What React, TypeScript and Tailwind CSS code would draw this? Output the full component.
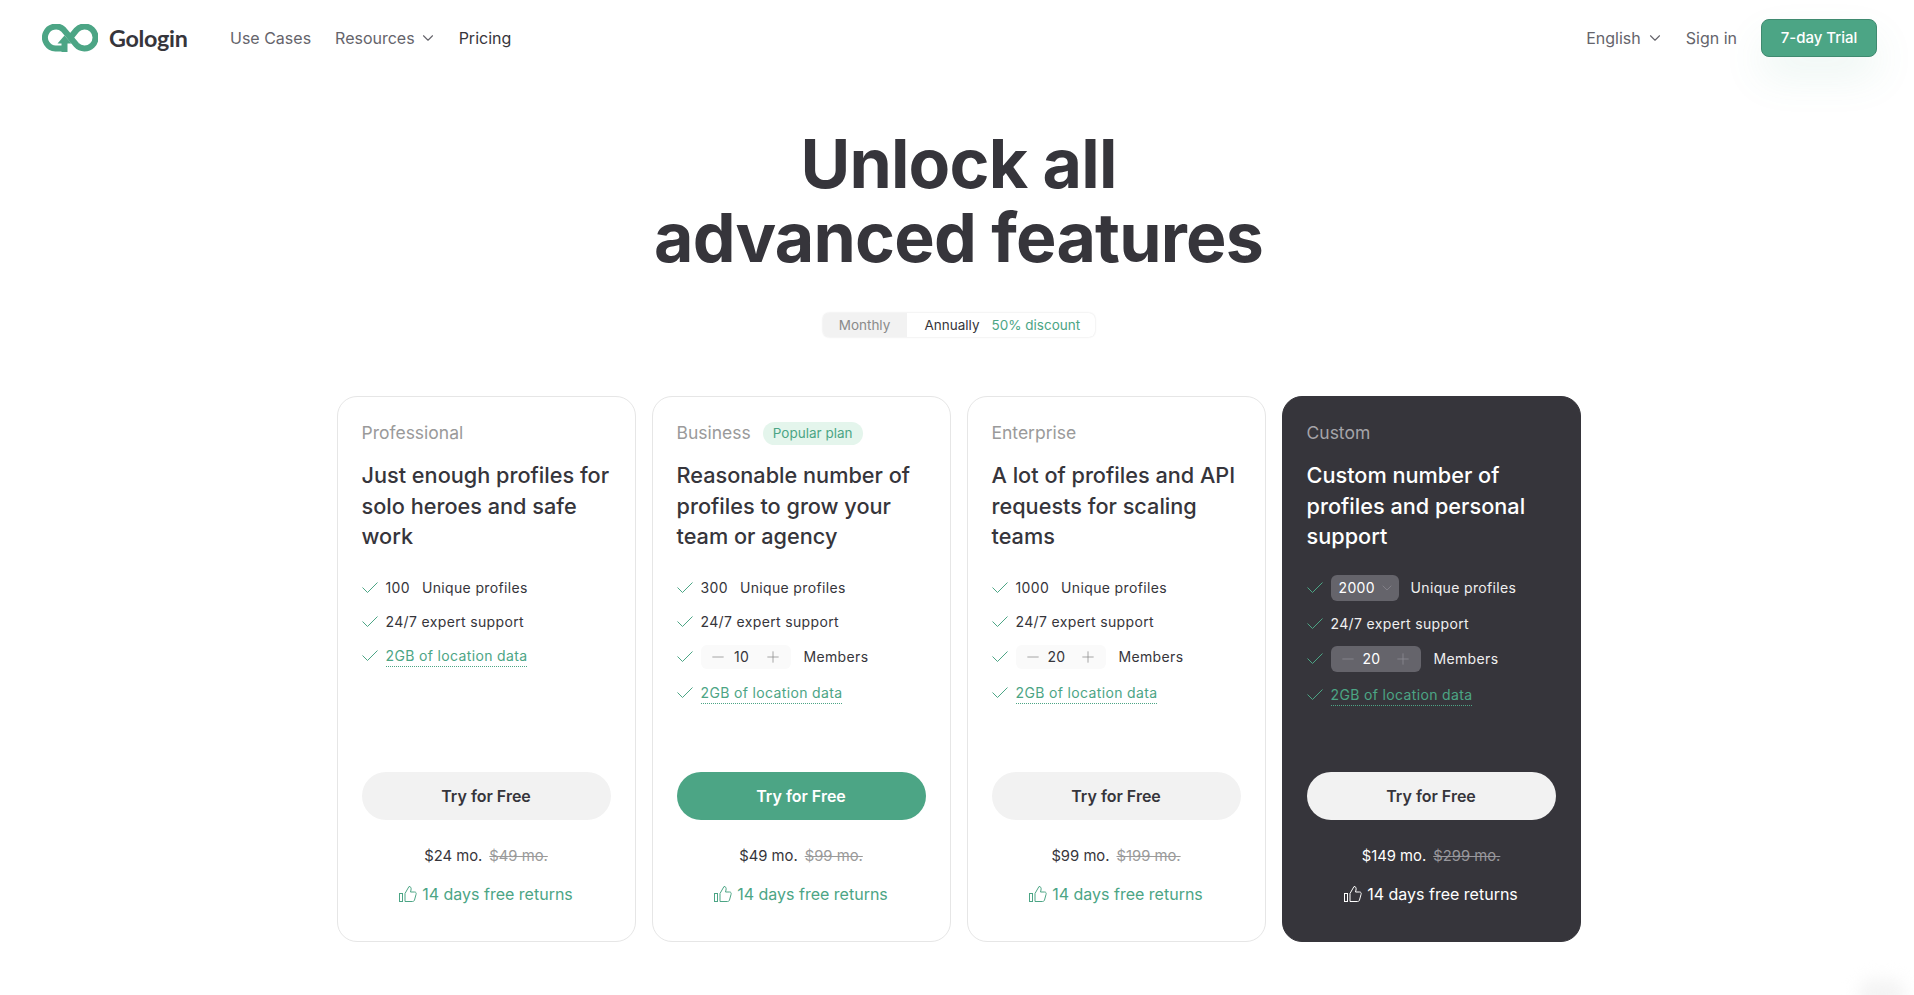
import React from 'react';
import { ChevronDown, Minus, Plus } from 'lucide-react';

type Plan = {
  name: string;
  title: string;
  profiles: string;
  members?: string;
  price: string;
  oldPrice: string;
  popular?: boolean;
  dark?: boolean;
};

const plans: Plan[] = [
  { name: 'Professional', title: 'Just enough profiles for solo heroes and safe work', profiles: '100', price: '$24 mo.', oldPrice: '$49 mo.' },
  { name: 'Business', title: 'Reasonable number of profiles to grow your team or agency', profiles: '300', members: '10', price: '$49 mo.', oldPrice: '$99 mo.', popular: true },
  { name: 'Enterprise', title: 'A lot of profiles and API requests for scaling teams', profiles: '1000', members: '20', price: '$99 mo.', oldPrice: '$199 mo.' },
  { name: 'Custom', title: 'Custom number of profiles and personal support', profiles: '2000', members: '20', price: '$149 mo.', oldPrice: '$299 mo.', dark: true },
];

const Logo = () => (
  <svg width="56" height="28" viewBox="0 0 56 28" fill="none" className="shrink-0">
    <path d="M24 24.500 L13.500 24.500 A11 11 0 1 1 21.500 5.500 L34.500 21 A11 11 0 1 0 34.500 6 L28 14" stroke="#4ca585" strokeWidth="6" />
    <path d="M19.500 28 V19.500 H15.500 L22.500 11.500 L29.500 19.500 H25.500 V28 Z" fill="#4ca585" />
  </svg>
);

const CheckMark = () => (
  <svg width="16" height="11" viewBox="0 0 16 11" fill="none" className="mr-2 shrink-0">
    <path d="M0.500 5.500 L5.500 10.500 L15.500 0.500" stroke="#4ca585" strokeWidth="1" />
  </svg>
);

const ThumbIcon = () => (
  <svg width="18" height="18" viewBox="0 0 18 18" fill="none" stroke="currentColor" strokeWidth="1" className="shrink-0">
    <rect x="0.500" y="8.500" width="3" height="8" />
    <path d="M6 8.500 L10 1.500 C11.500 1.500 12.500 2.500 12 5 L11.500 7 H15.500 C17 7 17.500 8 17 9.500 L15.500 15 C15.200 16 14.500 16.500 13.500 16.500 H6 Z" />
  </svg>
);

const FeatureRow = ({ children }: { children: React.ReactNode }) => (
  <li className="flex items-center">
    <CheckMark />
    {children}
  </li>
);

const Stepper = ({ value, dark }: { value: string; dark?: boolean }) => (
  <span className={`flex w-[90px] items-center justify-between rounded-[6px] px-[8px] ${dark ? 'h-[26px] bg-[#65646b] text-white' : 'h-[24px] bg-[#fafafa] text-[#36353b]'}`}>
    <Minus size={18} strokeWidth={1} className={dark ? 'text-[#8f8e95]' : 'text-[#8a8a8a]'} />
    <span className="mr-[8px]">{value}</span>
    <Plus size={18} strokeWidth={1} className={dark ? 'text-[#8f8e95]' : 'text-[#8a8a8a]'} />
  </span>
);

const PlanCard = ({ plan }: { plan: Plan }) => {
  const { dark } = plan;
  return (
    <div className={`flex h-[546px] w-[299px] flex-col rounded-[20px] border px-6 pt-[24px] ${dark ? 'border-[#36353b] bg-[#36353b]' : 'border-[#e6e6e6] bg-white'}`}>
      <div className="flex h-6 items-center">
        <span className={`text-[17.500px] ${dark ? 'text-[#a5a4a9]' : 'text-[#9a9a9a]'}`}>{plan.name}</span>
        {plan.popular && (
          <span className="ml-3 rounded-full bg-[#e4f5ec] px-[10px] py-[2px] text-[13.500px] leading-[19px] text-[#4ca585]">Popular plan</span>
        )}
      </div>
      <h3 className={`mt-[15px] text-[21.700px] font-medium leading-[30.500px] ${dark ? 'text-white' : 'text-[#36353b]'}`}>{plan.title}</h3>
      <ul className={`flex flex-col text-[14px] tracking-[0.35px] ${dark ? 'mt-[23px] gap-[12px] text-[#f0f0f0]' : 'mt-[25px] gap-[13px] text-[#36353b]'}`}>
        <FeatureRow>
          {dark ? (
            <span className="mr-3 flex h-[26px] w-[68px] items-center justify-between rounded-[6px] bg-[#65646b] pl-2 pr-1 text-white">
              2000
              <ChevronDown size={16} strokeWidth={1} className="text-[#8f8e95]" />
            </span>
          ) : (
            <span className="mr-3">{plan.profiles}</span>
          )}
          Unique profiles
        </FeatureRow>
        <FeatureRow>24/7 expert support</FeatureRow>
        {plan.members && (
          <FeatureRow>
            <Stepper value={plan.members} dark={dark} />
            <span className="ml-[13px]">Members</span>
          </FeatureRow>
        )}
        <FeatureRow>
          <span className="border-b border-dotted border-[#4ca585] leading-[21px] text-[#4ca585]">2GB of location data</span>
        </FeatureRow>
      </ul>
      <button className={`mt-auto h-12 w-full rounded-full text-[16px] font-semibold ${plan.popular ? 'bg-[#4ca585] text-white' : 'bg-[#f2f2f2] text-[#36353b]'}`}>
        Try for Free
      </button>
      <div className={`mt-[26px] flex justify-center gap-[7px] text-[14.800px] leading-[20px] ${dark ? 'text-white' : 'text-[#36353b]'}`}>
        <span>{plan.price}</span>
        <span className={`line-through ${dark ? 'text-[#98979c]' : 'text-[#9a9a9a]'}`}>{plan.oldPrice}</span>
      </div>
      <div className={`mt-[18px] mb-[37px] flex items-center justify-center gap-[5px] text-[16px] leading-[20px] ${dark ? 'text-white' : 'text-[#4ca585]'}`}>
        <ThumbIcon />
        14 days free returns
      </div>
    </div>
  );
};

export default function App() {
  return (
    <div className="relative h-[995px] overflow-hidden bg-white font-['Inter',sans-serif]">
      <header className="flex h-[76px] items-center justify-between pl-[42px] pr-[37px]">
        <div className="flex items-center">
          <Logo />
          <span className="ml-[11px] w-[78px] font-['Lato',sans-serif] text-[23.300px] font-bold tracking-[-0.3px] text-[#36353b]">Gologin</span>
          <nav className="ml-[43px] flex items-center gap-6 text-[16px] text-[#65646b]">
            <a>Use Cases</a>
            <a className="flex items-center gap-1">
              Resources
              <ChevronDown size={18} strokeWidth={1.500} className="-mr-[2px]" />
            </a>
            <a className="text-[#36353b]">Pricing</a>
          </nav>
        </div>
        <div className="flex items-center text-[16px] text-[#65646b]">
          <a className="flex items-center gap-[5px]">
            English
            <ChevronDown size={18} strokeWidth={1.500} className="-mr-[2px]" />
          </a>
          <a className="ml-6">Sign in</a>
          <button className="ml-6 h-[38px] w-[116px] rounded-[8px] border border-[#3f8a70] bg-[#4ca585] text-[15px] font-medium text-white shadow-[0_20px_40px_rgba(76,165,133,0.1)]">
            7-day Trial
          </button>
        </div>
      </header>

      <main className="flex flex-col items-center pl-[3px]">
        <h1 className="mt-[50px] text-center text-[68px] font-bold leading-[74px] tracking-[-0.800px] text-[#36353b]">
          Unlock all
          <br />
          advanced features
        </h1>
        <div className="mt-[39px] flex h-6 w-[272px] items-center rounded-[6px] bg-white text-[13.500px] shadow-[0_0_2px_rgba(0,0,0,0.15)]">
          <span className="flex h-6 w-[84px] items-center justify-center rounded-l-[6px] bg-[#f2f2f2] text-[#8a8a8a]">Monthly</span>
          <span className="ml-[18px] text-[#36353b]">Annually</span>
          <span className="ml-3 text-[#4ca585]">50% discount</span>
        </div>
        <div className="mt-[59px] flex gap-4">
          {plans.map(plan => (
            <PlanCard key={plan.name} plan={plan} />
          ))}
        </div>
      </main>

      <div className="absolute -bottom-4 right-2 h-8 w-12 rounded-full bg-[#f4f4f4] blur-sm" />
    </div>
  );
}
